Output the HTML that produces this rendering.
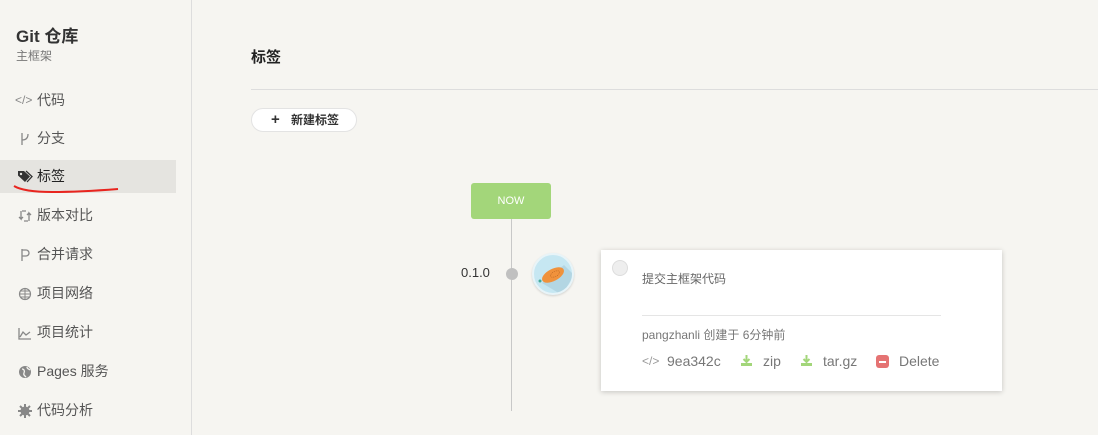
<!DOCTYPE html>
<html><head><meta charset="utf-8"><style>
*{margin:0;padding:0;box-sizing:border-box}
body{width:1098px;height:435px;background:#f6f5f1;font-family:"Liberation Sans","Noto Sans CJK SC",sans-serif;position:relative;overflow:hidden;color:#555}
.a{position:absolute;white-space:nowrap}
.side{position:absolute;left:0;top:0;width:192px;height:435px;border-right:1px solid #ddd}
.nav{position:absolute;left:0;width:176px;height:33px;font-size:14px;color:#555;line-height:33px}
.nav .ic{position:absolute;left:17px;top:0;width:16px;height:33px;text-align:center;font-size:12px;color:#888}
.nav .ic svg{position:absolute;left:1px;top:10px}
.nav .t{position:absolute;left:37px}
.lk{position:absolute;top:353px;font-size:14px;color:#777}
</style></head><body>
<div class="side">
<div class="a" style="left:16px;top:22px;font-size:17px;font-weight:bold;color:#333">Git 仓库</div>
<div class="a" style="left:16px;top:47px;font-size:12px;color:#777">主框架</div>
<div class="nav" style="top:84px"><span class="ic" style="left:15px">&lt;/&gt;</span><span class="t">代码</span></div>
<div class="nav" style="top:122px"><span class="ic"><svg width="14" height="14"><path d="M4 1v12M4 8c4 0 6-2 6-6" stroke="#888" stroke-width="1.3" fill="none"/></svg></span><span class="t">分支</span></div>
<div class="nav" style="top:160px;background:#e5e4e0;color:#222"><span class="ic"><svg width="15" height="13" viewBox="0 0 15 13"><path d="M0 1h6l6 5.5-5 5.5-7-6.5z" fill="#333"/><path d="M8 1l6 5.5-5 5.5" stroke="#333" stroke-width="1.3" fill="none"/><circle cx="3" cy="4" r="1.2" fill="#e5e4e0"/></svg></span><span class="t">标签</span></div>
<svg class="a" style="left:12px;top:184px" width="110" height="12"><path d="M2 2 Q12 8 40 8 T106 5" stroke="#e8251f" stroke-width="2" fill="none"/></svg>
<div class="nav" style="top:199px"><span class="ic"><svg width="14" height="14"><path d="M3 2v8l-2-2M3 10l2-2M11 12V4l2 2M11 4L9 6M4 2h4M6 12h4" stroke="#888" stroke-width="1.3" fill="none"/></svg></span><span class="t">版本对比</span></div>
<div class="nav" style="top:238px"><span class="ic"><svg width="14" height="14"><path d="M4 1v12M4 2h4a3 3 0 0 1 0 6H4" stroke="#888" stroke-width="1.3" fill="none"/></svg></span><span class="t">合并请求</span></div>
<div class="nav" style="top:277px"><span class="ic"><svg width="14" height="14"><circle cx="7" cy="7" r="5.5" stroke="#888" stroke-width="1.2" fill="none"/><path d="M1.5 7h11M7 1.5v11M3 4h8M3 10h8" stroke="#888" stroke-width="1"/></svg></span><span class="t">项目网络</span></div>
<div class="nav" style="top:316px"><span class="ic"><svg width="14" height="14"><path d="M1 2v11h12M2 11l3-5 3 3 4-3" stroke="#888" stroke-width="1.3" fill="none"/></svg></span><span class="t">项目统计</span></div>
<div class="nav" style="top:355px"><span class="ic"><svg width="14" height="14"><circle cx="7" cy="7" r="6" fill="#888"/><path d="M4 4c2 0 3 2 2 4s1 3 2 4M9 2c0 2 2 2 3 3" stroke="#f6f5f1" stroke-width="1.3" fill="none"/></svg></span><span class="t">Pages 服务</span></div>
<div class="nav" style="top:394px"><span class="ic"><svg width="14" height="14"><circle cx="7" cy="7" r="4.5" fill="#888"/><path d="M7 0v14M0 7h14M2 2l10 10M12 2L2 12" stroke="#888" stroke-width="2"/></svg></span><span class="t">代码分析</span></div>
</div>
<div class="a" style="left:251px;top:46px;font-size:15px;font-weight:bold;color:#222">标签</div>
<div class="a" style="left:251px;top:89px;width:847px;height:1px;background:#ddd"></div>
<div class="a" style="left:251px;top:108px;width:106px;height:24px;border:1px solid #e3e3e3;border-radius:12px;background:#fff;font-size:12px;line-height:22px;color:#333;font-weight:bold"><span style="position:absolute;left:19px;font-size:15px">+</span><span style="position:absolute;left:39px">新建标签</span></div>
<div class="a" style="left:471px;top:183px;width:80px;height:36px;background:#a3d67a;border-radius:3px;color:#fff;font-size:11px;text-align:center;line-height:36px">NOW</div>
<div class="a" style="left:511px;top:219px;width:1px;height:192px;background:#c8c8c8"></div>
<div class="a" style="left:506px;top:268px;width:12px;height:12px;border-radius:50%;background:#c0c0c0"></div>
<div class="a" style="left:461px;top:265px;font-size:13px;color:#333">0.1.0</div>
<div class="a" style="left:532px;top:253px;width:42px;height:42px;border-radius:50%;background:#c6e7f2;border:2px solid #e8f4f8;overflow:hidden;box-shadow:0 1px 2px rgba(0,0,0,.15)"><svg width="38" height="38"><path d="M8 28 L28 40 L40 20 L30 10z" fill="#b3d6e3"/><ellipse cx="19" cy="20" rx="12" ry="6" transform="rotate(-28 19 20)" fill="#f0923c"/><ellipse cx="21" cy="19" rx="5" ry="2.5" transform="rotate(-28 21 19)" fill="none" stroke="#b06020" stroke-width="0.6" stroke-dasharray="1 1"/><circle cx="6" cy="26" r="1.5" fill="#4a9"/></svg></div>
<div class="a" style="left:601px;top:250px;width:401px;height:141px;background:#fff;box-shadow:0 1px 5px rgba(0,0,0,.2)"></div>
<div class="a" style="left:612px;top:260px;width:16px;height:16px;border-radius:50%;background:#eee;border:1px solid #ddd"></div>
<div class="a" style="left:642px;top:270px;font-size:12px;color:#666">提交主框架代码</div>
<div class="a" style="left:642px;top:315px;width:299px;height:1px;background:#e5e5e5"></div>
<div class="a" style="left:642px;top:326px;font-size:12px;color:#777">pangzhanli 创建于 6分钟前</div>
<div class="lk" style="left:642px;font-size:12px;top:354px;color:#999">&lt;/&gt;</div>
<div class="lk" style="left:667px">9ea342c</div>
<svg class="a" style="left:740px;top:354px" width="13" height="13"><path d="M6.5 1v7M3.5 5l3 3 3-3" stroke="#a3d67a" stroke-width="2" fill="none"/><path d="M1 9v3h11V9" fill="#a3d67a"/></svg>
<div class="lk" style="left:763px">zip</div>
<svg class="a" style="left:800px;top:354px" width="13" height="13"><path d="M6.5 1v7M3.5 5l3 3 3-3" stroke="#a3d67a" stroke-width="2" fill="none"/><path d="M1 9v3h11V9" fill="#a3d67a"/></svg>
<div class="lk" style="left:823px">tar.gz</div>
<div class="a" style="left:876px;top:355px;width:13px;height:13px;background:#e57373;border-radius:3px"><span style="position:absolute;left:3px;top:5.5px;width:7px;height:2px;background:#fff"></span></div>
<div class="lk" style="left:899px">Delete</div>
</body></html>
